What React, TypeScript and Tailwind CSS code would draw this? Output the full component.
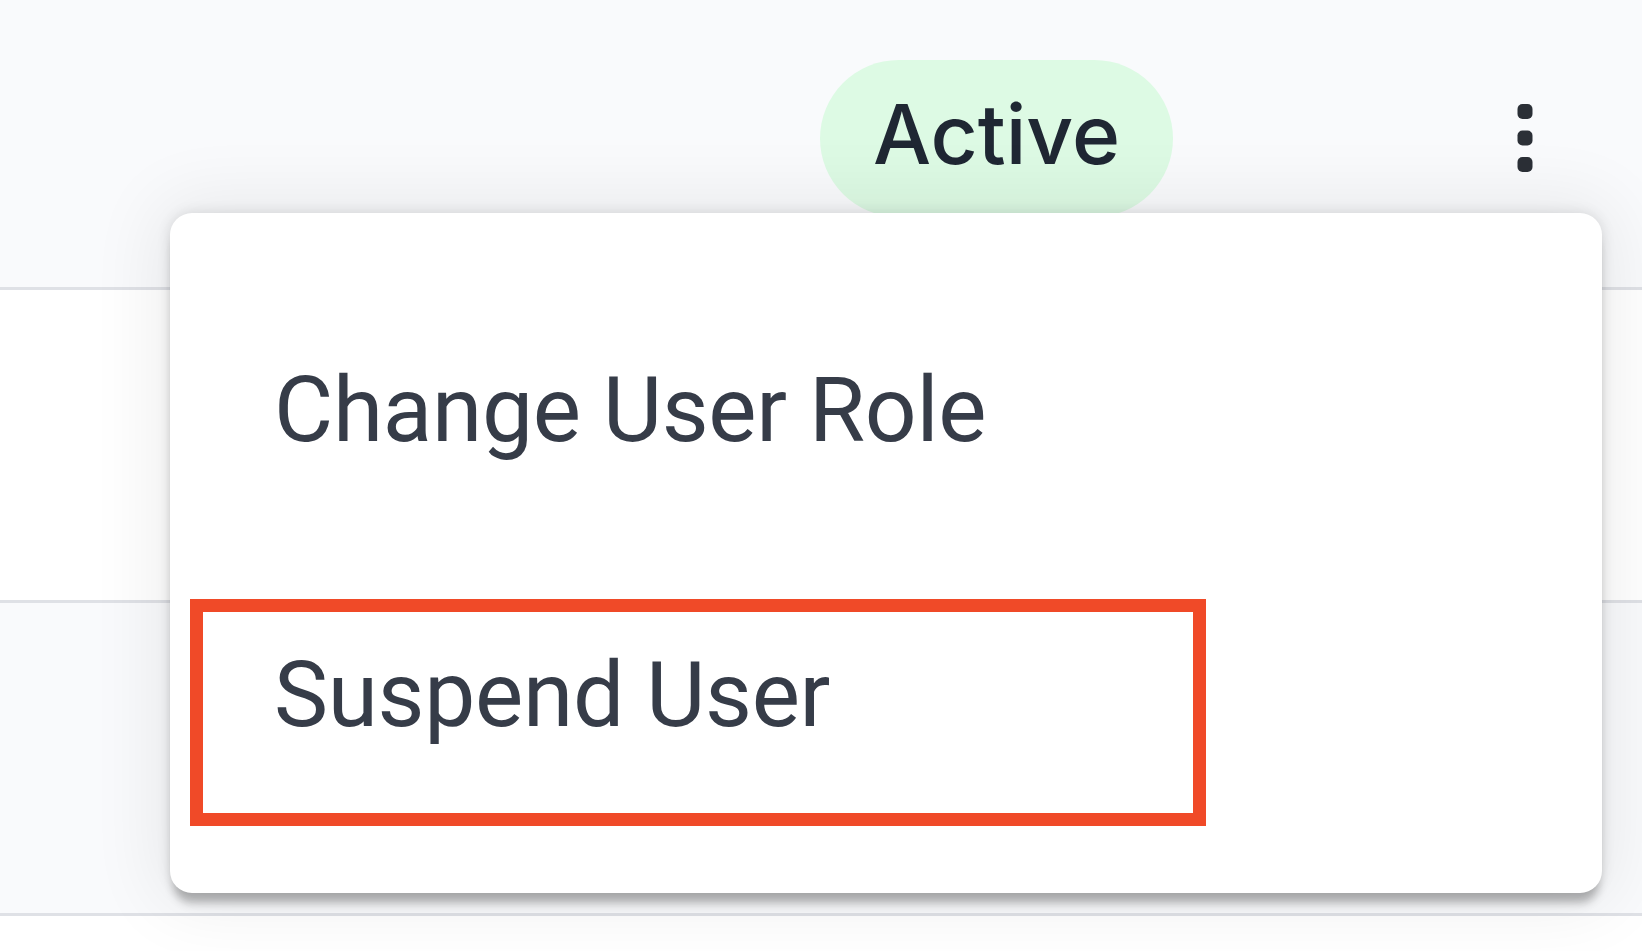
import React from "react";

function Kebab() {
  return (
    <svg width="92" height="92" viewBox="0 0 92 92" fill="currentColor">
      <rect x="38.5" y="12" width="15" height="15" rx="5" />
      <rect x="38.5" y="38.5" width="15" height="15" rx="5" />
      <rect x="38.5" y="65" width="15" height="15" rx="5" />
    </svg>
  );
}

export default function App() {
  return (
    <div className="relative h-[951px] w-[1642px] overflow-hidden bg-white font-['Roboto',sans-serif]">
      {/* table rows */}
      <div className="flex flex-col">
        <div className="flex h-[287px] items-center bg-[#f9fafc] pb-[11px]">
          <div className="w-[820px] shrink-0" />
          <div className="flex h-[157px] w-[353px] shrink-0 items-center justify-center rounded-full bg-[#ddfae4] pb-[6px]">
            <span className="font-['Inter',sans-serif] text-[82px] font-medium leading-none text-[#1f2733]">
              Active
            </span>
          </div>
          <div className="flex-1" />
          <div className="mr-[71px] flex h-[92px] w-[92px] items-center justify-center text-[#2b2f36]">
            <Kebab />
          </div>
        </div>
        <div className="h-[3px] bg-[#dfe1e6]" />
        <div className="h-[310px] bg-white" />
        <div className="h-[3px] bg-[#dfe1e6]" />
        <div className="h-[310px] bg-[#f9fafc]" />
        <div className="h-[3px] bg-[#dfe1e6]" />
        <div className="h-[35px] bg-white" />
      </div>

      {/* dropdown menu */}
      <div className="absolute left-[170px] top-[213px] flex h-[680px] w-[1432px] flex-col rounded-[22px] bg-white py-[55px] shadow-[0_0_14px_rgba(0,0,0,0.12),0_14px_10px_-4px_rgba(0,0,0,0.26),0_0_70px_14px_rgba(0,0,0,0.07)]">
        <div className="flex h-[285px] items-center pl-[104px]">
          <span className="text-[91px] leading-none tracking-[-0.3px] text-[#363c48]">Change User Role</span>
        </div>
        <div className="flex h-[285px] items-center pl-[104px]">
          <span className="text-[91px] leading-none tracking-[-0.3px] text-[#363c48]">Suspend User</span>
        </div>
      </div>

      {/* highlight annotation */}
      <div className="pointer-events-none absolute left-[190px] top-[599px] h-[227px] w-[1016px] border-[13px] border-[#f04a28]" />
    </div>
  );
}
